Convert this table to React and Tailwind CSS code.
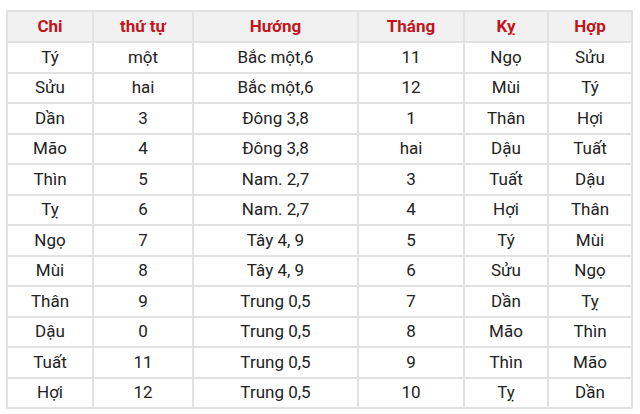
import React from "react";

const rows = [
  ["Tý", "một", "Bắc một,6", "11", "Ngọ", "Sửu"],
  ["Sửu", "hai", "Bắc một,6", "12", "Mùi", "Tý"],
  ["Dần", "3", "Đông 3,8", "1", "Thân", "Hợi"],
  ["Mão", "4", "Đông 3,8", "hai", "Dậu", "Tuất"],
  ["Thìn", "5", "Nam. 2,7", "3", "Tuất", "Dậu"],
  ["Tỵ", "6", "Nam. 2,7", "4", "Hợi", "Thân"],
  ["Ngọ", "7", "Tây 4, 9", "5", "Tý", "Mùi"],
  ["Mùi", "8", "Tây 4, 9", "6", "Sửu", "Ngọ"],
  ["Thân", "9", "Trung 0,5", "7", "Dần", "Tỵ"],
  ["Dậu", "0", "Trung 0,5", "8", "Mão", "Thìn"],
  ["Tuất", "11", "Trung 0,5", "9", "Thìn", "Mão"],
  ["Hợi", "12", "Trung 0,5", "10", "Tỵ", "Dần"],
];

const headers = ["Chi", "thứ tự", "Hướng", "Tháng", "Kỵ", "Hợp"];
const widths = ["w-[86px]", "w-[100px]", "w-[165px]", "w-[106px]", "w-[84px]", "w-[84px]"];

export default function App() {
  return (
    <div className="w-[640px] h-[414px] bg-white pl-[6px] pt-[10px] font-['Roboto',sans-serif]">
      <table className="border-collapse table-fixed w-[625px]">
        <thead>
          <tr className="h-[31px] bg-[#f1f1f1]">
            {headers.map((h, i) => (
              <th
                key={i}
                className={`${widths[i]} border-2 border-[#e2e2e2] text-[#c0161c] font-bold text-[17px] text-center p-0 leading-none`}
              >
                {h}
              </th>
            ))}
          </tr>
        </thead>
        <tbody>
          {rows.map((r, ri) => (
            <tr key={ri} className="h-[30.5px]">
              {r.map((c, ci) => (
                <td
                  key={ci}
                  className="border-2 border-[#e2e2e2] text-[#222222] text-[17px] text-center p-0 leading-none"
                >
                  {c}
                </td>
              ))}
            </tr>
          ))}
        </tbody>
      </table>
    </div>
  );
}
